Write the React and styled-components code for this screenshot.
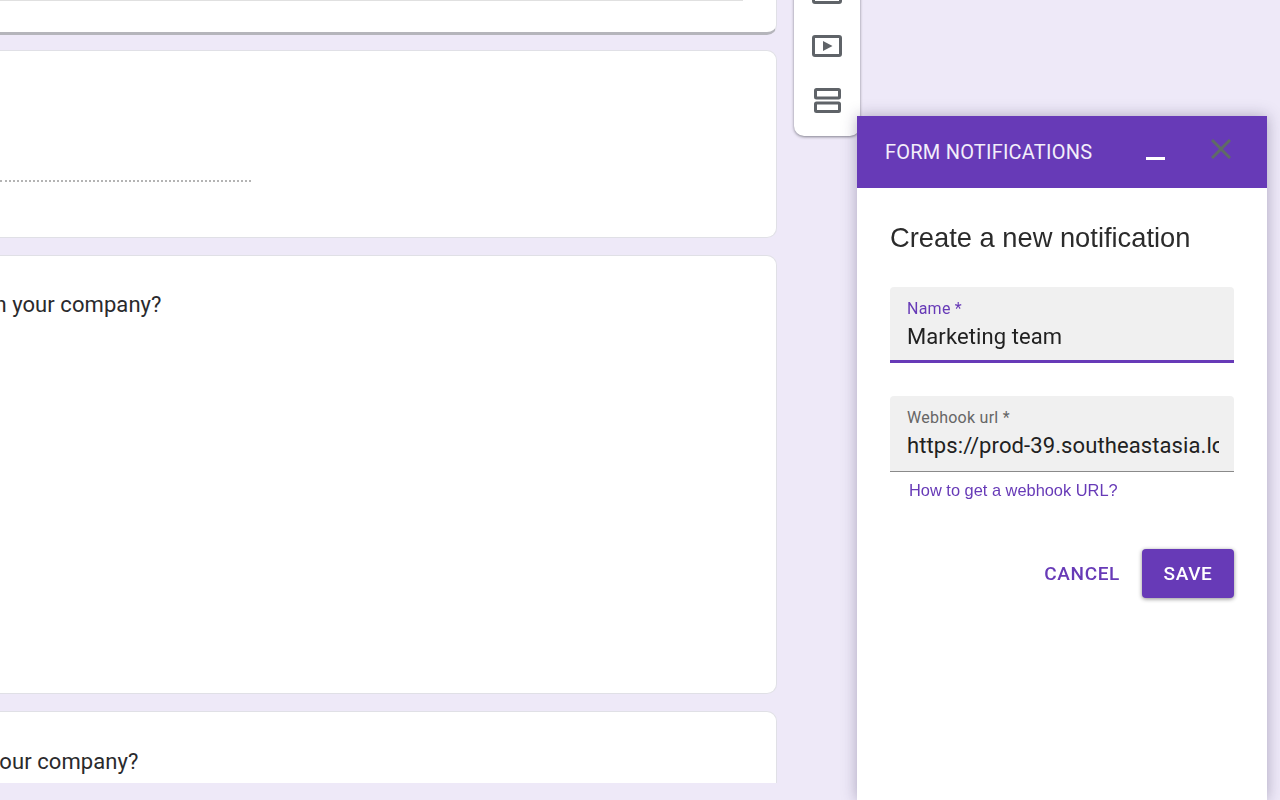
import styled, { createGlobalStyle } from 'styled-components';

const purple = '#673ab7';

const GlobalStyle = createGlobalStyle`
    html, body {
        margin: 0;
        height: 800px;
        overflow: hidden;
        background: #eee9f8;
        font-family: Roboto, "Liberation Sans", sans-serif;
    }
`;

const Page = styled.div`
    display: flex;
    align-items: flex-start;
    gap: 17px;
    height: 783px;
    overflow: hidden;
`;

const Column = styled.main`
    display: flex;
    flex-direction: column;
    flex: none;
    gap: 17px;
    width: 777px;
    margin-top: -166px;
`;

const Card = styled.section`
    box-sizing: border-box;
    flex: none;
    height: ${({ $height }) => $height}px;
    overflow: hidden;
    padding: ${({ $pad }) => $pad || '0'};
    background: #fff;
    border: 1px solid #e0e0e6;
    border-left: none;
    border-radius: 0 10px 10px 0;
    ${({ $raised }) => $raised && 'border-bottom: 3px solid #b5b5bb; margin-bottom: -2px;'}
`;

const TopRule = styled.div`
    width: 743px;
    margin-top: 165px;
    border-top: 1px solid #e0e0e0;
`;

const DottedRule = styled.div`
    width: 251px;
    margin-top: 129px;
    border-top: 2px dotted #b4b4b4;
`;

const Question = styled.p`
    margin: 0 0 0 ${({ $shift }) => $shift}px;
    font-size: 22px;
    line-height: 28px;
    letter-spacing: 0.07px;
    color: #2a2a2c;
    white-space: nowrap;
`;

const Toolbar = styled.aside`
    display: flex;
    flex-direction: column;
    align-items: center;
    flex: none;
    gap: 31px;
    box-sizing: border-box;
    width: 66px;
    height: 186px;
    margin-top: -50px;
    padding-top: 32px;
    background: #fff;
    border-radius: 0 0 10px 10px;
    box-shadow: 0 1px 3px rgba(60, 60, 70, 0.6);
`;

const ToolIcon = styled.svg`
    display: block;
    flex: none;
    fill: none;
    stroke: #5f6368;
    stroke-width: 3;
`;

const Panel = styled.div`
    position: fixed;
    top: 116px;
    left: 857px;
    display: flex;
    flex-direction: column;
    width: 410px;
    height: 684px;
    background: #fff;
    box-shadow: 0 0 14px rgba(50, 40, 80, 0.35);
`;

const PanelHeader = styled.header`
    display: flex;
    align-items: center;
    flex: none;
    height: 72px;
    padding: 0 36px 0 28px;
    background: ${purple};
`;

const PanelTitle = styled.h2`
    flex: 1;
    margin: 0 0 1px;
    font-size: 20px;
    font-weight: 400;
    letter-spacing: 0.22px;
    color: #f3eefa;
`;

const Minimize = styled.span`
    width: 19px;
    height: 3px;
    margin: 13px 46px 0 0;
    background: #fff;
`;

const CloseIcon = styled.svg`
    flex: none;
    margin-top: -7px;
`;

const PanelBody = styled.div`
    display: flex;
    flex-direction: column;
    padding: 33px 33px;
`;

const Heading = styled.h3`
    margin: 0 0 32px;
    font-family: "Liberation Sans", Arial, sans-serif;
    font-size: 27.3px;
    line-height: 34px;
    font-weight: 400;
    color: #2b2b2b;
`;

const Field = styled.label`
    display: flex;
    flex-direction: column;
    box-sizing: border-box;
    height: 76px;
    padding: 12px 16px 0;
    margin-bottom: ${({ $gap }) => $gap}px;
    background: #f0f0f0;
    border-radius: 4px 4px 0 0;
    border-bottom: ${({ $active }) => ($active ? `3px solid ${purple}` : '1px solid #8a8a8a')};
`;

const FieldLabel = styled.span`
    padding-left: 1px;
    font-size: 16px;
    line-height: 19px;
    letter-spacing: 0.25px;
    color: ${({ $active }) => ($active ? purple : '#666')};
`;

const FieldInput = styled.input`
    width: 100%;
    padding: 0 0 0 1px;
    margin-top: 5px;
    border: none;
    outline: none;
    background: none;
    font-family: Roboto, sans-serif;
    font-size: 22px;
    line-height: 28px;
    letter-spacing: 0.1px;
    color: #212121;
`;

const HelpLink = styled.a`
    margin: 8px 0 0 19px;
    font-family: "Liberation Sans", Arial, sans-serif;
    font-size: 16.4px;
    line-height: 20px;
    color: ${purple};
`;

const Actions = styled.div`
    display: flex;
    justify-content: flex-end;
    align-items: center;
    gap: 22px;
    margin-top: 49px;
`;

const Button = styled.button`
    height: 49px;
    padding: 0;
    width: ${({ $filled }) => ($filled ? '92px' : 'auto')};
    border: none;
    border-radius: 4px;
    font-family: Roboto, sans-serif;
    font-size: 19px;
    font-weight: 500;
    letter-spacing: 0.65px;
    color: ${({ $filled }) => ($filled ? '#fff' : purple)};
    background: ${({ $filled }) => ($filled ? purple : 'transparent')};
    box-shadow: ${({ $filled }) => ($filled ? '0 1px 4px rgba(0, 0, 0, 0.45)' : 'none')};
`;

const App = () => (
    <>
        <GlobalStyle />
        <Page>
            <Column>
                <Card $height={201} $raised>
                    <TopRule />
                </Card>
                <Card $height={188}>
                    <DottedRule />
                </Card>
                <Card $height={439} $pad="35px 0 0">
                    <Question $shift={-11}>in your company?</Question>
                </Card>
                <Card $height={120} $pad="36px 0 0">
                    <Question $shift={-11}>your company?</Question>
                </Card>
            </Column>
            <Toolbar>
                <ToolIcon width="30" height="22" viewBox="0 0 30 22">
                    <rect x="1.5" y="1.5" width="27" height="19" rx="1.5" />
                </ToolIcon>
                <ToolIcon width="30" height="22" viewBox="0 0 30 22">
                    <rect x="1.5" y="1.5" width="27" height="19" rx="1.5" />
                    <path d="M11 6 L20.5 11 L11 16 Z" fill="#5f6368" stroke="none" />
                </ToolIcon>
                <ToolIcon width="27" height="25" viewBox="0 0 27 25">
                    <rect x="1.5" y="1.5" width="24" height="8.5" rx="1" />
                    <rect x="1.5" y="15" width="24" height="8.5" rx="1" />
                </ToolIcon>
            </Toolbar>
        </Page>
        <Panel>
            <PanelHeader>
                <PanelTitle>FORM NOTIFICATIONS</PanelTitle>
                <Minimize />
                <CloseIcon width="20" height="20" viewBox="0 0 20 20">
                    <path d="M1 1 L19 19 M19 1 L1 19" stroke="#5f6b66" strokeWidth="3" />
                </CloseIcon>
            </PanelHeader>
            <PanelBody>
                <Heading>Create a new notification</Heading>
                <Field $active $gap={33}>
                    <FieldLabel $active>Name *</FieldLabel>
                    <FieldInput readOnly value="Marketing team" />
                </Field>
                <Field>
                    <FieldLabel>Webhook url *</FieldLabel>
                    <FieldInput readOnly value="https://prod-39.southeastasia.logic.azure.com" />
                </Field>
                <HelpLink>How to get a webhook URL?</HelpLink>
                <Actions>
                    <Button>CANCEL</Button>
                    <Button $filled>SAVE</Button>
                </Actions>
            </PanelBody>
        </Panel>
    </>
);

export default App;
